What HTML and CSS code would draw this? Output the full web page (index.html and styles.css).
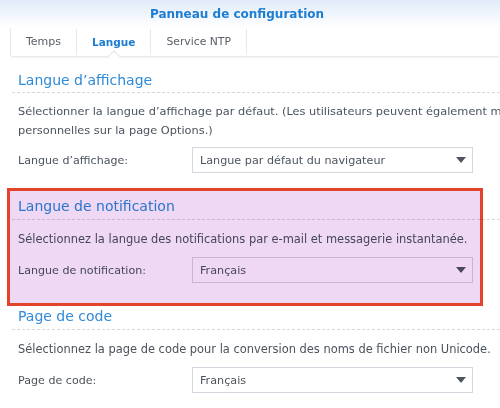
FILE: index.html
```html
<!DOCTYPE html>
<html lang="fr">
<head>
<meta charset="utf-8">
<link rel="stylesheet" href="styles.css">
</head>
<body>
<div class="page">
  <header class="header">Panneau de configuration</header>
  <nav class="tabs">
    <div class="tab">Temps</div>
    <div class="tab active">Langue</div>
    <div class="tab ntp">Service NTP</div>
  </nav>
  <main class="content">
    <section class="section first">
      <h2 class="heading">Langue d’affichage</h2>
      <p class="desc wide">Sélectionner la langue d’affichage par défaut. (Les utilisateurs peuvent également modifier leurs préférences personnelles sur la page Options.)</p>
      <div class="row">
        <span class="label">Langue d’affichage:</span>
        <div class="select"><span>Langue par défaut du navigateur</span><i class="caret"></i></div>
      </div>
    </section>
    <section class="section">
      <h2 class="heading">Langue de notification</h2>
      <p class="desc">Sélectionnez la langue des notifications par e-mail et messagerie instantanée.</p>
      <div class="row">
        <span class="label">Langue de notification:</span>
        <div class="select"><span>Français</span><i class="caret"></i></div>
      </div>
    </section>
    <section class="section">
      <h2 class="heading">Page de code</h2>
      <p class="desc">Sélectionnez la page de code pour la conversion des noms de fichier non Unicode.</p>
      <div class="row">
        <span class="label">Page de code:</span>
        <div class="select"><span>Français</span><i class="caret"></i></div>
      </div>
    </section>
  </main>
  <div class="highlight"></div>
</div>
</body>
</html>
```

FILE: styles.css
```css
html, body {
  margin: 0;
  padding: 0;
  background: #fff;
}
.page {
  position: relative;
  width: 500px;
  height: 408px;
  overflow: hidden;
  font-family: "DejaVu Sans", Verdana, sans-serif;
  color: #4b545e;
}
.header {
  height: 28px;
  line-height: 28px;
  text-align: center;
  font-weight: bold;
  font-size: 12px;
  color: #1c7dd2;
  background: linear-gradient(#e0ebf8, #ffffff);
  padding-right: 26px;
}
.tabs {
  display: flex;
  margin-left: 10px;
  height: 28px;
  border-left: 1px solid #e6e8ea;
  box-shadow: 0 2px 2px -1px rgba(0, 0, 0, 0.12);
  background: #fff;
  position: relative;
}
.tab {
  position: relative;
  padding: 0 15px;
  font-size: 11px;
  line-height: 26px;
  color: #5a6068;
  border-right: 1px solid #e6e8ea;
  margin: 1px 0;
}
.tab.ntp {
  font-size: 10.8px;
}
.tab.active {
  font-weight: bold;
  font-size: 10.5px;
  color: #1c7dd2;
}
.tab.active::after {
  content: "";
  position: absolute;
  left: 50%;
  bottom: -5px;
  width: 7px;
  height: 7px;
  margin-left: -4px;
  background: #fff;
  border-left: 1px solid #e3e5e8;
  border-top: 1px solid #e3e5e8;
  transform: rotate(45deg);
}
.content {
  padding-left: 12px;
}
.section {
  margin-top: 23px;
}
.section.first {
  margin-top: 14px;
}
.heading {
  margin: 0;
  font-weight: normal;
  font-size: 14px;
  line-height: 20px;
  color: #2f8ad8;
  padding: 0 0 3px 6px;
  border-bottom: 1px dashed #d4d8dd;
}
.section.first .heading {
  padding-bottom: 2px;
}
.desc {
  margin: 10px 0 0;
  padding-left: 6px;
  font-size: 11.45px;
  line-height: 19px;
  width: 700px;
  color: #4a535d;
}
.section.first .desc {
  margin-top: 9px;
}
.desc.wide {
  width: 660px;
  font-size: 11.35px;
}
.row {
  display: flex;
  align-items: center;
  margin-top: 8px;
  padding-left: 6px;
}
.section.first .row {
  margin-top: 7px;
}
.label {
  width: 174px;
  flex: none;
  font-size: 11.1px;
}
.select {
  width: 281px;
  flex: none;
  height: 26px;
  box-sizing: border-box;
  border: 1px solid #d3d8de;
  background: #fff;
  display: flex;
  align-items: center;
  justify-content: space-between;
  padding: 0 6px 0 7px;
  font-size: 11.2px;
  color: #4b545e;
}
.caret {
  width: 0;
  height: 0;
  border-left: 5px solid transparent;
  border-right: 5px solid transparent;
  border-top: 6px solid #4f555c;
}
.highlight {
  position: absolute;
  left: 7px;
  top: 188px;
  width: 476px;
  height: 118px;
  box-sizing: border-box;
  border: 3px solid #e2432b;
  background: #efd8f3;
  mix-blend-mode: multiply;
}
```
